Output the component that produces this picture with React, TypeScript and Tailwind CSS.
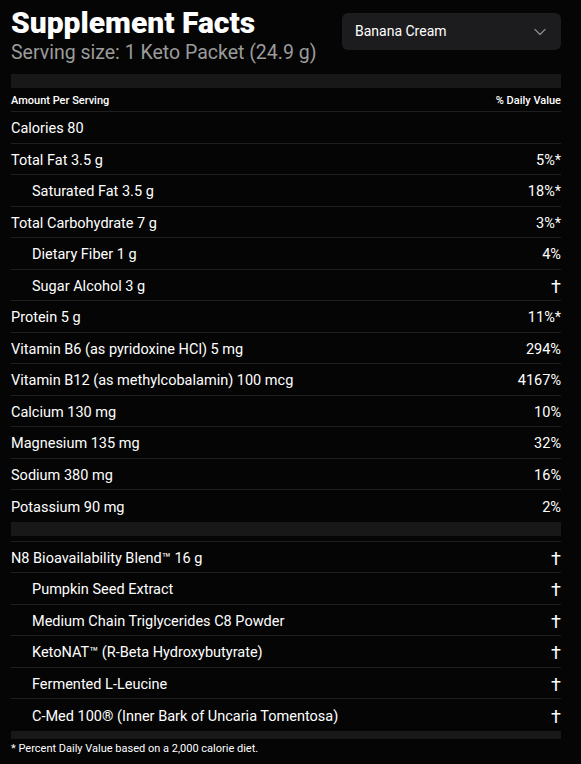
import { ChevronDown } from "lucide-react";

type Row = { label: string; value: string; sub?: boolean };

const nutrients: Row[] = [
  { label: "Calories 80", value: "" },
  { label: "Total Fat 3.5 g", value: "5%*" },
  { label: "Saturated Fat 3.5 g", value: "18%*", sub: true },
  { label: "Total Carbohydrate 7 g", value: "3%*" },
  { label: "Dietary Fiber 1 g", value: "4%", sub: true },
  { label: "Sugar Alcohol 3 g", value: "†", sub: true },
  { label: "Protein 5 g", value: "11%*" },
  { label: "Vitamin B6 (as pyridoxine HCl) 5 mg", value: "294%" },
  { label: "Vitamin B12 (as methylcobalamin) 100 mcg", value: "4167%" },
  { label: "Calcium 130 mg", value: "10%" },
  { label: "Magnesium 135 mg", value: "32%" },
  { label: "Sodium 380 mg", value: "16%" },
  { label: "Potassium 90 mg", value: "2%" },
];

const blend: Row[] = [
  { label: "N8 Bioavailability Blend™ 16 g", value: "†" },
  { label: "Pumpkin Seed Extract", value: "†", sub: true },
  { label: "Medium Chain Triglycerides C8 Powder", value: "†", sub: true },
  { label: "KetoNAT™ (R-Beta Hydroxybutyrate)", value: "†", sub: true },
  { label: "Fermented L-Leucine", value: "†", sub: true },
  { label: "C-Med 100® (Inner Bark of Uncaria Tomentosa)", value: "†", sub: true },
];

function FactRow({ row, last }: { row: Row; last?: boolean }) {
  return (
    <div
      className={`flex h-[31.5px] items-center justify-between pt-[4px] text-[14.5px] leading-[18px] text-white ${
        last ? "" : "border-b border-[#1f1f1f]"
      }`}
    >
      <span className={row.sub ? "pl-[21px]" : ""}>{row.label}</span>
      <span className={row.value === "†" ? "text-[18px]" : ""}>{row.value}</span>
    </div>
  );
}

export default function App() {
  return (
    <div className="min-h-[764px] w-[581px] bg-[#050505] pl-[11px] pr-[20px] pt-[5px] font-['Roboto',sans-serif] text-white">
      <div className="flex items-start justify-between">
        <div>
          <h1 className="text-[30px] font-black leading-[36px]">Supplement Facts</h1>
          <p className="text-[19.5px] leading-[24px] text-[#9b9b9b]">Serving size: 1 Keto Packet (24.9 g)</p>
        </div>
        <button className="mt-[8px] flex h-[37px] w-[219px] items-center justify-between rounded-md bg-[#1c1c1e] pl-[13px] pr-[11px] text-[14px] text-white">
          <span>Banana Cream</span>
          <ChevronDown className="h-5 w-5 text-[#8a8a8e]" strokeWidth={1.5} />
        </button>
      </div>

      <div className="mt-[9px] h-[14px] bg-[#181818]" />
      <div className="flex h-[24px] items-center justify-between border-b border-[#1f1f1f] pt-[3px] text-[11px] font-medium">
        <span>Amount Per Serving</span>
        <span>% Daily Value</span>
      </div>
      {nutrients.map((r, i) => (
        <FactRow key={r.label} row={r} last={i === nutrients.length - 1} />
      ))}

      <div className="h-[14px] bg-[#181818]" />
      <div className="h-[6px] border-b border-[#1f1f1f]" />
      {blend.map((r, i) => (
        <FactRow key={r.label} row={r} last={i === blend.length - 1} />
      ))}
      <div className="h-[8px] bg-[#181818]" />
      <p className="pt-[3px] text-[11px] leading-[14px]">* Percent Daily Value based on a 2,000 calorie diet.</p>
    </div>
  );
}
